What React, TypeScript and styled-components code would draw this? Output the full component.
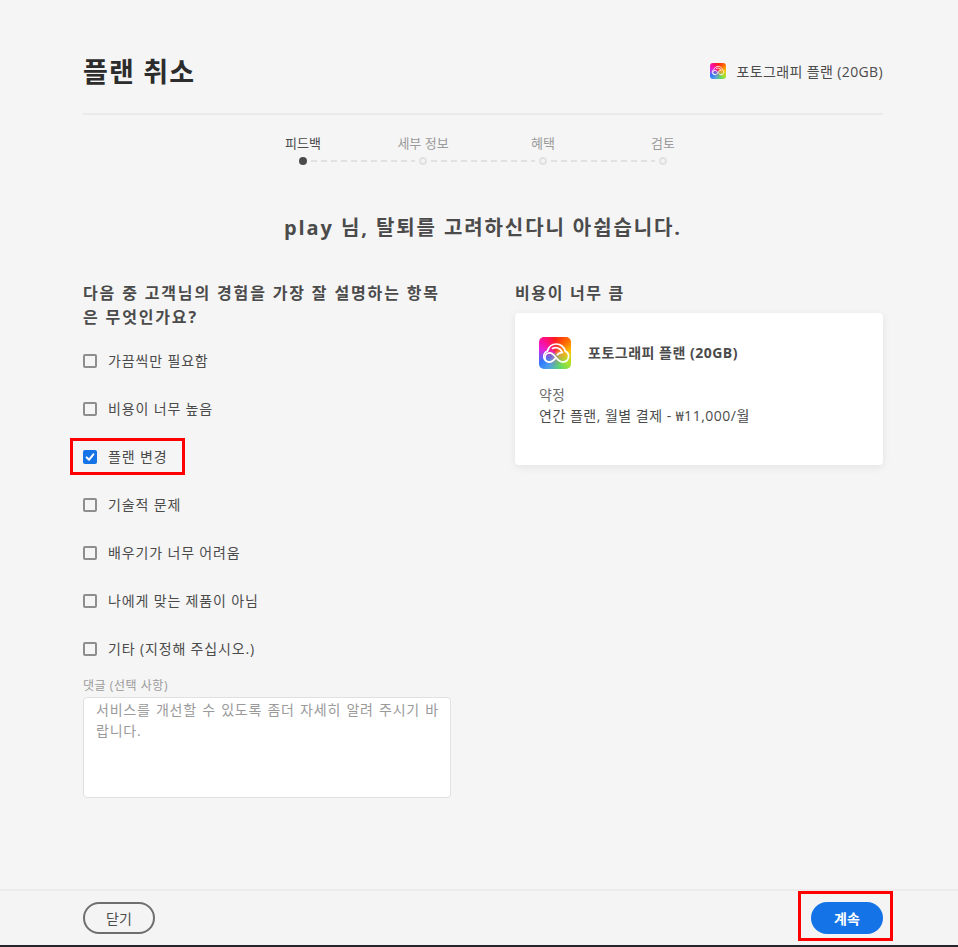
import React from 'react';
import styled, { createGlobalStyle } from 'styled-components';

const GlobalStyle = createGlobalStyle`
  html, body {
    margin: 0;
    padding: 0;
    background: #f5f5f5;
  }
  body {
    font-family: "Open Sans", "Noto Sans CJK KR", sans-serif;
    color: #4b4b4b;
  }
  * { box-sizing: border-box; }
`;

const Page = styled.div`
  position: relative;
  width: 958px;
  height: 947px;
  display: flex;
  flex-direction: column;
  background: #f5f5f5;
  overflow: hidden;
`;

const Main = styled.main`
  flex: 1;
  padding: 0 75px 0 83px;
`;

const Header = styled.header`
  height: 115px;
  display: flex;
  align-items: center;
  justify-content: space-between;
  padding-top: 27px;
  border-bottom: 2px solid #eaeaea;
`;

const Title = styled.h1`
  margin: 4px 0 0;
  font-size: 27px;
  line-height: 32px;
  font-weight: 700;
  letter-spacing: 1.2px;
  color: #2c2c2c;
`;

const HeaderPlan = styled.div`
  display: flex;
  align-items: center;
  gap: 11px;
  font-size: 14px;
  letter-spacing: 0.37px;
  color: #4b4b4b;
  margin-top: 1px;
`;

const LogoTile = styled.div<{ $size: number }>`
  width: ${({ $size }) => $size}px;
  height: ${({ $size }) => $size}px;
  border-radius: ${({ $size }) => Math.round($size / 6)}px;
  background:
    radial-gradient(circle at 50% 50%, rgba(240, 60, 130, 0.55) 0%, rgba(240, 60, 130, 0) 60%),
    conic-gradient(from 0deg, #ff1a1a 0deg, #ff6a00 45deg, #ffc400 85deg, #a6e22e 130deg, #5fd86a 160deg, #4f9fe8 205deg, #2f7bff 235deg, #e21ee0 285deg, #ff0f8a 320deg, #ff1a1a 360deg);
  display: flex;
  align-items: center;
  justify-content: center;
  flex-shrink: 0;
`;

const Steps = styled.ol`
  list-style: none;
  margin: 19px 0 0 160px;
  padding: 0;
  display: grid;
  grid-template-columns: repeat(4, 120px);
`;

const Step = styled.li<{ $active?: boolean; $last?: boolean }>`
  position: relative;
  display: flex;
  flex-direction: column;
  align-items: center;
  gap: 5px;
  font-size: 13px;
  line-height: 18px;
  color: ${({ $active }) => ($active ? '#4b4b4b' : '#9a9a9a')};

  &::after {
    content: "";
    display: ${({ $last }) => ($last ? 'none' : 'block')};
    position: absolute;
    left: 68px;
    width: 104px;
    bottom: 3px;
    height: 2px;
    background: repeating-linear-gradient(90deg, #e1e1e1 0 6px, transparent 6px 10px);
  }
`;

const StepDot = styled.span<{ $active?: boolean }>`
  width: 8px;
  height: 8px;
  border-radius: 50%;
  background: ${({ $active }) => ($active ? '#4b4b4b' : '#f5f5f5')};
  border: ${({ $active }) => ($active ? 'none' : '2px solid #e1e1e1')};
`;

const Farewell = styled.h2`
  margin: 49px 0 0;
  text-align: center;
  font-size: 20px;
  line-height: 28px;
  font-weight: 700;
  letter-spacing: 1.9px;
  color: #4b4b4b;
`;

const Columns = styled.div`
  margin-top: 39px;
  display: grid;
  grid-template-columns: 368px 368px;
  justify-content: space-between;
  column-gap: 64px;
`;

const Left = styled.section`
  display: flex;
  flex-direction: column;
`;

const Question = styled.h3`
  margin: 0;
  width: 360px;
  font-size: 16px;
  line-height: 24px;
  font-weight: 700;
  letter-spacing: 1.85px;
  color: #4b4b4b;
  word-break: break-all;
`;

const OptionList = styled.div`
  margin-top: 8px;
  display: flex;
  flex-direction: column;
`;

const OptionRow = styled.label`
  height: 48px;
  display: flex;
  align-items: center;
  gap: 11px;
  font-size: 14px;
  letter-spacing: 0.85px;
  color: #4b4b4b;
`;

const OptionText = styled.span`
  margin-bottom: 2px;
`;

const Box = styled.span<{ $checked?: boolean }>`
  width: 14px;
  height: 14px;
  border-radius: 2px;
  display: flex;
  align-items: center;
  justify-content: center;
  background: ${({ $checked }) => ($checked ? '#1473e6' : 'transparent')};
  border: ${({ $checked }) => ($checked ? 'none' : '2px solid #8e8e8e')};
`;

const CommentLabel = styled.div`
  margin-top: 4px;
  font-size: 12px;
  line-height: 18px;
  letter-spacing: 0.55px;
  color: #9a9a9a;
`;

const CommentBox = styled.div`
  margin-top: 2px;
  width: 368px;
  height: 101px;
  padding: 1px 8px 0 12px;
  background: #fff;
  border: 1px solid #e1e1e1;
  border-radius: 4px;
  font-size: 14px;
  line-height: 21px;
  color: #9a9a9a;
  letter-spacing: 0.75px;
  word-spacing: 1px;
  word-break: break-all;
`;

const Right = styled.section``;

const SummaryHeading = styled.h3`
  margin: 0;
  font-size: 16px;
  line-height: 24px;
  font-weight: 700;
  letter-spacing: 1.65px;
  color: #4b4b4b;
`;

const Card = styled.div`
  margin-top: 8px;
  height: 152px;
  padding: 24px 24px 0 24px;
  background: #fff;
  border-radius: 4px;
  box-shadow: 0 2px 8px rgba(0, 0, 0, 0.08);
`;

const CardTop = styled.div`
  display: flex;
  align-items: center;
  gap: 17px;
`;

const CardPlan = styled.div`
  margin-top: -2px;
  font-size: 14px;
  font-weight: 700;
  letter-spacing: 0.5px;
  color: #4b4b4b;
`;

const CardTerm = styled.div`
  margin-top: 15px;
  font-size: 14px;
  line-height: 21px;
  color: #6e6e6e;
`;

const CardPrice = styled.div`
  font-size: 14px;
  line-height: 21px;
  letter-spacing: 0.5px;
  color: #4b4b4b;
`;

const Footer = styled.footer`
  height: 58px;
  padding: 0 75px 0 83px;
  display: flex;
  align-items: center;
  justify-content: space-between;
  border-top: 2px solid #ebebeb;
  border-bottom: 2px solid #25252b;
  background: #f4f4f4;
`;

const Button = styled.button<{ $primary?: boolean }>`
  width: 72px;
  height: 32px;
  border-radius: 16px;
  padding: 0;
  font-family: inherit;
  font-size: 14px;
  font-weight: ${({ $primary }) => ($primary ? 700 : 400)};
  color: ${({ $primary }) => ($primary ? '#fff' : '#4b4b4b')};
  background: ${({ $primary }) => ($primary ? '#1473e6' : 'transparent')};
  border: ${({ $primary }) => ($primary ? 'none' : '2px solid #6e6e6e')};
`;

// red marks drawn over the screenshot
const Annotation = styled.div<{ $x: number; $y: number; $w: number; $h: number }>`
  position: absolute;
  left: ${({ $x }) => $x}px;
  top: ${({ $y }) => $y}px;
  width: ${({ $w }) => $w}px;
  height: ${({ $h }) => $h}px;
  border: 3px solid #ff0000;
  pointer-events: none;
`;

const CloudMark = ({ size }: { size: number }) => (
  <svg width={size} height={size} viewBox="0 0 32 32" fill="none" stroke="#fff" strokeWidth="1.7" strokeLinecap="round" strokeLinejoin="round">
    <path d="M10.5 25a5.6 5.6 0 0 1-2-10.9C9.8 9.6 13.2 7 17.2 7c4.4 0 8.1 3 9 7.1A5.7 5.7 0 0 1 24 25" />
    <path d="M24 25c-3.8 0-5.6-2.6-7.6-5.2-1.6-2.1-3.2-4-5.8-4a4.6 4.6 0 0 0 0 9.2c2.9 0 4.4-1.9 5.8-3.8" />
    <path d="M18.4 17.7c1.3-1.3 2.9-2.2 5-2" />
    <path d="M13.5 11.4c3.4-1.6 7.8-.6 9.3 3.2" />
  </svg>
);

const CheckMark = () => (
  <svg width="10" height="10" viewBox="0 0 10 10" fill="none" stroke="#fff" strokeWidth="2" strokeLinecap="round" strokeLinejoin="round">
    <path d="M1.6 5.4 4 7.8 8.4 2.4" />
  </svg>
);

const steps = ['피드백', '세부 정보', '혜택', '검토'];

const options = [
  { label: '가끔씩만 필요함' },
  { label: '비용이 너무 높음' },
  { label: '플랜 변경', checked: true },
  { label: '기술적 문제' },
  { label: '배우기가 너무 어려움' },
  { label: '나에게 맞는 제품이 아님' },
  { label: '기타 (지정해 주십시오.)' },
];

const App = () => {
  return (
    <Page>
      <GlobalStyle />
      <Main>
        <Header>
          <Title>플랜 취소</Title>
          <HeaderPlan>
            <LogoTile $size={16}>
              <CloudMark size={15} />
            </LogoTile>
            포토그래피 플랜 (20GB)
          </HeaderPlan>
        </Header>

        <Steps>
          {steps.map((step, i) => (
            <Step key={step} $active={i === 0} $last={i === steps.length - 1}>
              {step}
              <StepDot $active={i === 0} />
            </Step>
          ))}
        </Steps>

        <Farewell>play 님, 탈퇴를 고려하신다니 아쉽습니다.</Farewell>

        <Columns>
          <Left>
            <Question>다음 중 고객님의 경험을 가장 잘 설명하는 항목은 무엇인가요?</Question>
            <OptionList>
              {options.map((option) => (
                <OptionRow key={option.label}>
                  <Box $checked={option.checked}>{option.checked && <CheckMark />}</Box>
                  <OptionText>{option.label}</OptionText>
                </OptionRow>
              ))}
            </OptionList>
            <CommentLabel>댓글 (선택 사항)</CommentLabel>
            <CommentBox>서비스를 개선할 수 있도록 좀더 자세히 알려 주시기 바랍니다.</CommentBox>
          </Left>

          <Right>
            <SummaryHeading>비용이 너무 큼</SummaryHeading>
            <Card>
              <CardTop>
                <LogoTile $size={32}>
                  <CloudMark size={32} />
                </LogoTile>
                <CardPlan>포토그래피 플랜 (20GB)</CardPlan>
              </CardTop>
              <CardTerm>약정</CardTerm>
              <CardPrice>연간 플랜, 월별 결제 - ₩11,000/월</CardPrice>
            </Card>
          </Right>
        </Columns>
      </Main>

      <Footer>
        <Button>닫기</Button>
        <Button $primary>계속</Button>
      </Footer>

      <Annotation $x={70} $y={438} $w={115} $h={37} />
      <Annotation $x={798} $y={891} $w={95} $h={50} />
    </Page>
  );
};

export default App;
